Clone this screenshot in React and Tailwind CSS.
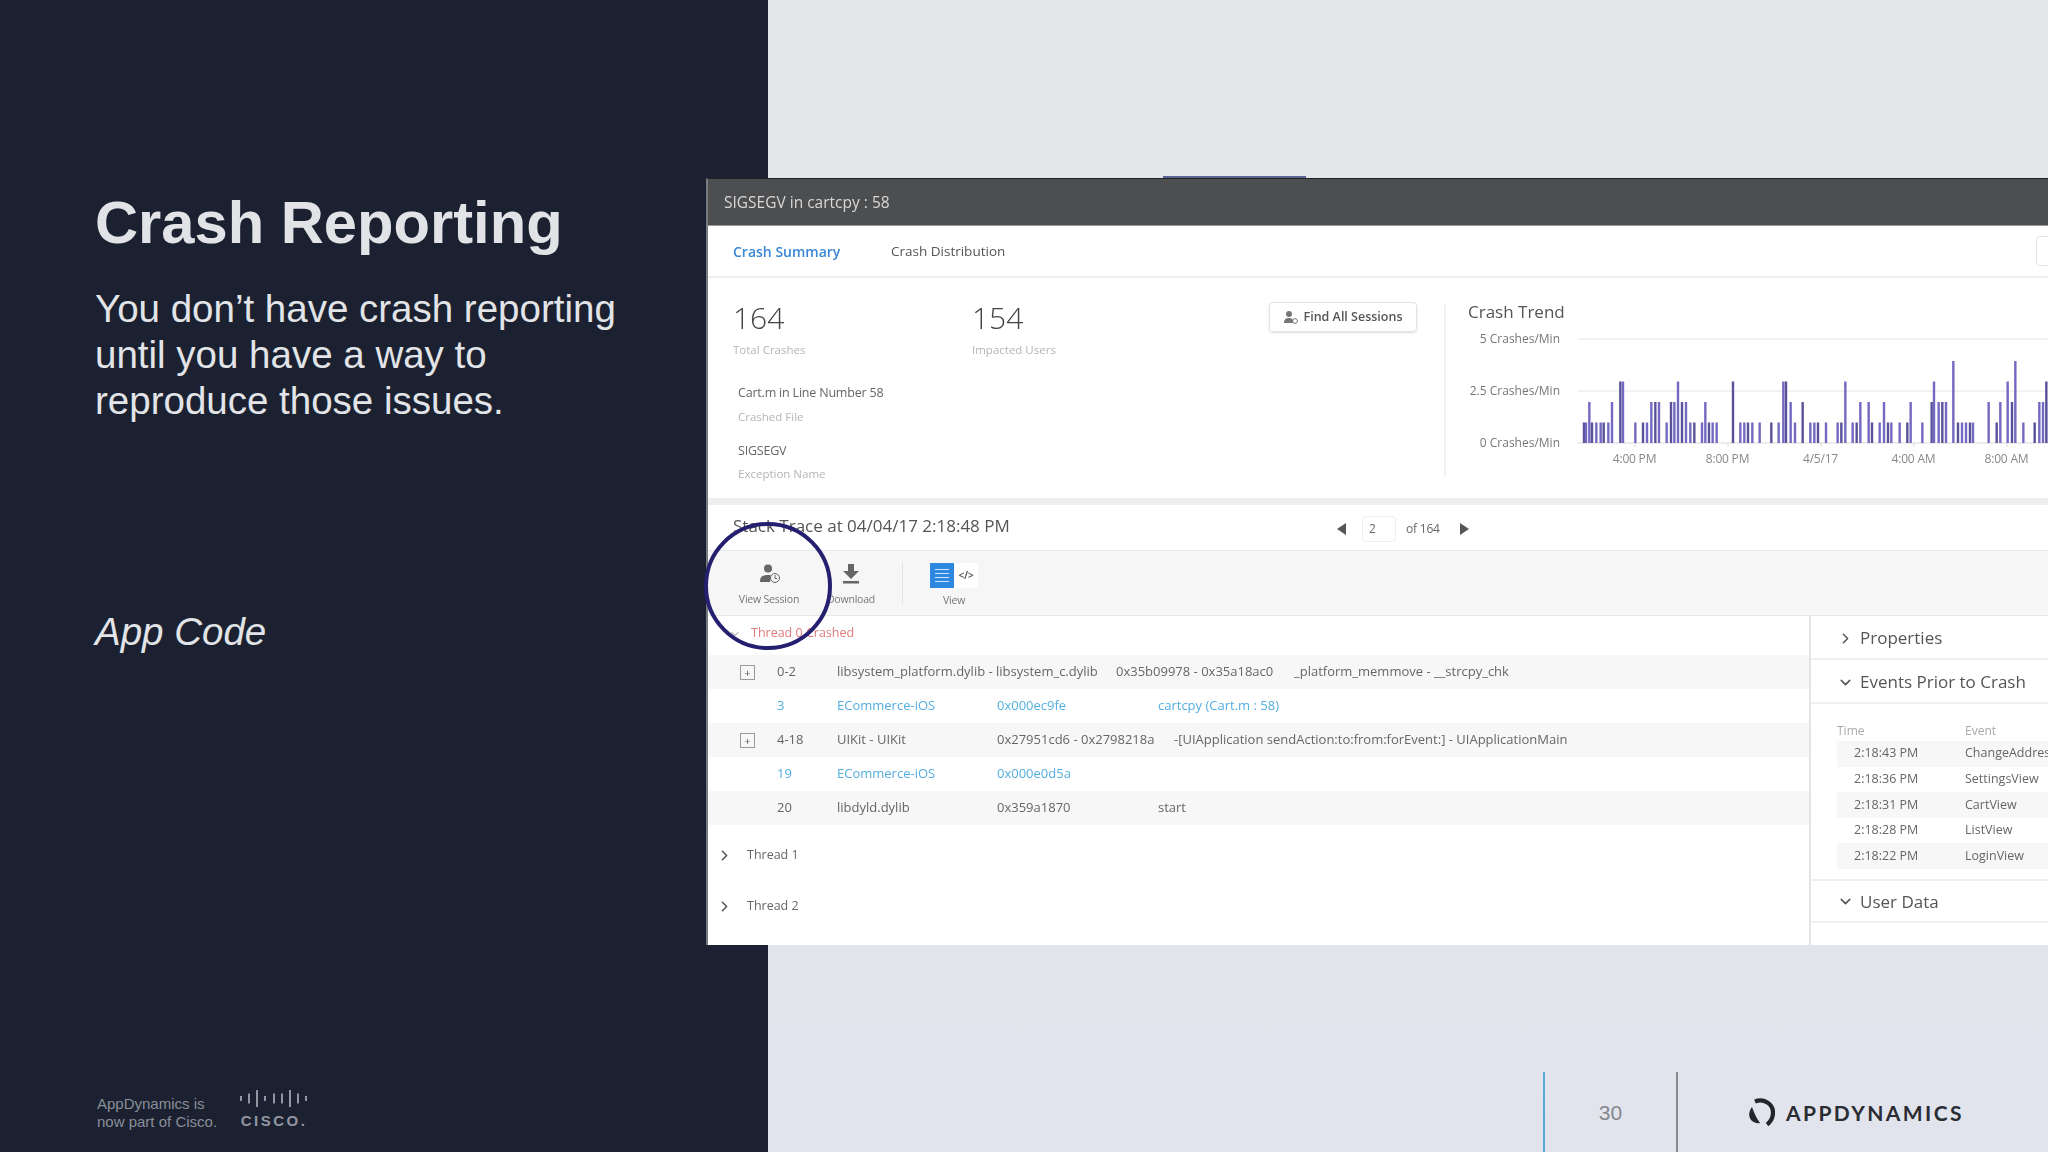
import React from 'react';
import { ChevronRight, ChevronDown } from 'lucide-react';

// bar x positions read off the chart crop, [x, level]
const bars = [
  [66, 1], [72, 1], [82, 2], [90, 1], [103, 1], [116, 1], [125, 1], [139, 1], [150, 2],
  [175, 3], [183, 3], [220, 1], [243, 1], [255, 1], [268, 2], [280, 2], [291, 2],
  [314, 1], [327, 2], [337, 2], [348, 3], [360, 2], [372, 2], [385, 1], [397, 1],
  [420, 1], [430, 2], [441, 1], [452, 1], [464, 1],
  [513, 3], [535, 1], [547, 1], [558, 1], [571, 1], [593, 1],
  [628, 1], [650, 1], [664, 3], [672, 3], [686, 2], [699, 1], [722, 2], [745, 1], [757, 1], [768, 1], [792, 1],
  [827, 1], [838, 1], [850, 3], [872, 1], [884, 1], [895, 2], [920, 2], [930, 1], [953, 1], [966, 2], [978, 1], [988, 1],
  [1013, 1], [1036, 1], [1046, 2], [1081, 1],
  [1109, 2], [1116, 3], [1130, 2], [1141, 2], [1152, 2], [1174, 4], [1188, 1], [1200, 1], [1212, 1], [1224, 1], [1233, 1],
  [1280, 2], [1304, 1], [1315, 2], [1337, 3], [1350, 2], [1360, 4], [1384, 1], [1418, 1], [1432, 2], [1443, 2], [1453, 3], [1461, 2],
];

const events = [
  ['2:18:43 PM', 'ChangeAddressView'],
  ['2:18:36 PM', 'SettingsView'],
  ['2:18:31 PM', 'CartView'],
  ['2:18:28 PM', 'ListView'],
  ['2:18:22 PM', 'LoginView'],
];

const CrashChart = () => (
  <svg width="478" height="112" viewBox="0 0 478 112" className="block">
    <line x1="6" y1="4" x2="478" y2="4" stroke="#eeeeee" strokeWidth="1.5" />
    <line x1="6" y1="56" x2="478" y2="56" stroke="#eeeeee" strokeWidth="1.5" />
    <line x1="6" y1="108" x2="478" y2="108" stroke="#e6e6e6" strokeWidth="1.5" />
    {bars.map(([x, level], i) => (
      <rect
        key={i}
        x={x / 3 + 1560 - 1570 - 1.2}
        y={108 - level * 20.5}
        width="2.4"
        height={level * 20.5}
        fill={i % 3 === 0 ? '#5a5299' : '#7469c2'}
      />
    ))}
    {[63, 156, 249, 342, 435].map((x) => (
      <line key={x} x1={x} y1="108" x2={x} y2="112" stroke="#dddddd" />
    ))}
  </svg>
);

const ExpandBox = () => (
  <span className="flex h-[15px] w-[15px] items-center justify-center border border-[#9a9a9a] text-[11px] leading-none text-[#555]">+</span>
);

const Caret = ({ open }) =>
  open ? (
    <ChevronDown size={17} strokeWidth={2.2} className="text-[#555]" />
  ) : (
    <ChevronRight size={17} strokeWidth={2.2} className="text-[#555]" />
  );

const CrashPanel = () => (
  <div className="flex h-[767px] w-[1342px] flex-col overflow-hidden border-t border-l-2 border-t-[#222] border-l-[#777a7e] bg-white font-['Open_Sans',sans-serif] blur-[0.6px]">
    <div className="flex h-[47px] shrink-0 items-center border-b border-[#999] bg-[#4d4e50] pl-[16px] pt-[2px] text-[15.5px] text-[#d8d8d8]">
      SIGSEGV in cartcpy : 58
    </div>

    <div className="relative flex h-[52px] shrink-0 items-center border-b-2 border-[#eeeeee] pl-[25px]">
      <span className="w-[158px] text-[14px] font-semibold text-[#3a86d4]">Crash Summary</span>
      <span className="text-[13.5px] font-medium text-[#555]">Crash Distribution</span>
      <span className="absolute right-[-10px] top-[10px] h-[30px] w-[22px] rounded-sm border border-[#e5e5e5]"></span>
    </div>

    <div className="flex h-[220px] shrink-0">
      <div className="w-[736px] shrink-0 pl-[25px]">
        <div className="flex pt-[22px]">
          <div className="w-[239px]">
            <div className="text-[30px] font-light leading-[36px] text-[#444]">164</div>
            <div className="mt-[6px] text-[11.5px] leading-[16px] text-[#b5b5b5]">Total Crashes</div>
          </div>
          <div>
            <div className="text-[30px] font-light leading-[36px] text-[#444]">154</div>
            <div className="mt-[6px] text-[11.5px] leading-[16px] text-[#b5b5b5]">Impacted Users</div>
          </div>
          <button className="ml-auto mr-[27px] mt-[2px] flex h-[30px] w-[148px] items-center justify-center gap-[6px] rounded-sm border border-[#e2e2e2] text-[12.5px] font-semibold text-[#555] shadow-sm">
            <svg width="14" height="15" viewBox="0 0 14 15" fill="#777">
              <circle cx="5" cy="4" r="3" />
              <path d="M0 13c0-4 2-5 5-5s4 1 4 3v2z" />
              <circle cx="11" cy="11" r="2.4" fill="none" stroke="#777" />
            </svg>
            Find All Sessions
          </button>
        </div>
        <div className="pl-[5px]">
          <div className="mt-[26px] text-[12.5px] leading-[18px] tracking-[-0.2px] text-[#666]">Cart.m in Line Number 58</div>
          <div className="mt-[7px] text-[11.5px] leading-[16px] text-[#b5b5b5]">Crashed File</div>
          <div className="mt-[17px] text-[12.5px] leading-[18px] tracking-[-0.2px] text-[#666]">SIGSEGV</div>
          <div className="mt-[6px] text-[11.5px] leading-[16px] text-[#b5b5b5]">Exception Name</div>
        </div>
      </div>
      <div className="mt-[27px] h-[172px] w-[2px] shrink-0 bg-[#f1f1f1]"></div>
      <div className="pl-[22px] pt-[24px]">
        <div className="text-[17px] leading-[20px] text-[#555]">Crash Trend</div>
        <div className="mt-[9px] flex">
          <div className="flex h-[120px] w-[92px] flex-col justify-between text-right text-[12px] leading-[16px] text-[#777]">
            <span>5 Crashes/Min</span>
            <span>2.5 Crashes/Min</span>
            <span>0 Crashes/Min</span>
          </div>
          <div className="ml-[12px] mt-[4px]">
            <CrashChart />
            <div className="mt-[4px] ml-[16px] flex text-center text-[12px] leading-[16px] tracking-[-0.2px] text-[#888]">
              <span className="w-[93px] shrink-0">4:00 PM</span>
              <span className="w-[93px] shrink-0">8:00 PM</span>
              <span className="w-[93px] shrink-0">4/5/17</span>
              <span className="w-[93px] shrink-0">4:00 AM</span>
              <span className="w-[93px] shrink-0">8:00 AM</span>
            </div>
          </div>
        </div>
      </div>
    </div>

    <div className="h-[7px] shrink-0 bg-[#eeeeee]"></div>

    <div className="flex h-[46px] shrink-0 items-center border-b border-[#e8e8e8] pl-[25px] pt-[2px]">
      <span className="mb-[5px] w-[604px] text-[17px] text-[#555]">Stack Trace at 04/04/17 2:18:48 PM</span>
      <svg width="9" height="12" viewBox="0 0 9 12" fill="#555"><path d="M9 0v12L0 6z" /></svg>
      <span className="ml-[16px] flex h-[26px] w-[34px] items-center rounded-sm border border-[#eeeeee] pl-[6px] text-[12px] text-[#666]">2</span>
      <span className="ml-[10px] text-[12px] tracking-[-0.2px] text-[#666]">of 164</span>
      <svg width="9" height="12" viewBox="0 0 9 12" fill="#555" className="ml-[20px]"><path d="M0 0v12l9-6z" /></svg>
    </div>

    <div className="flex h-[65px] shrink-0 items-start border-b border-[#e8e8e8] bg-[#f6f6f6] text-[10.5px] tracking-[-0.2px] text-[#777]">
      <div className="ml-[29px] flex w-[64px] flex-col items-center pt-[13px]">
        <svg width="24" height="20" viewBox="0 0 24 20" fill="#666">
          <circle cx="11" cy="4.5" r="4" />
          <path d="M3 18c0-5 2-7 8-7 2 0 3 .5 3 1l-1 6z" />
          <circle cx="18" cy="14" r="4.5" fill="#f6f6f6" stroke="#666" />
          <path d="M18 11v3.5h2" fill="none" stroke="#666" />
        </svg>
        <span className="mt-[7px] leading-[16px]">View Session</span>
      </div>
      <div className="ml-[18px] flex w-[64px] flex-col items-center pt-[13px]">
        <svg width="18" height="20" viewBox="0 0 18 20" fill="#666">
          <path d="M6 0h6v7h5l-8 8-8-8h5z" />
          <rect x="1" y="17" width="16" height="2.5" />
        </svg>
        <span className="mt-[7px] leading-[16px]">Download</span>
      </div>
      <div className="ml-[19px] mt-[11px] h-[43px] w-px bg-[#e4e4e4]"></div>
      <div className="ml-[27px] flex flex-col items-center pt-[12px]">
        <div className="flex h-[25px]">
          <span className="flex w-[24px] flex-col justify-center gap-[3px] bg-[#2f88e0] px-[5px]">
            <i className="h-px bg-[#cfe4fa]"></i>
            <i className="h-px bg-[#cfe4fa]"></i>
            <i className="h-px bg-[#cfe4fa]"></i>
            <i className="h-px bg-[#cfe4fa]"></i>
          </span>
          <span className="flex w-[24px] items-center justify-center bg-white text-[10px] font-bold text-[#666]">&lt;/&gt;</span>
        </div>
        <span className="mt-[4px] leading-[16px]">View</span>
      </div>
    </div>

    <div className="flex min-h-0 flex-1">
      <div className="min-w-0 flex-1 text-[13px] text-[#666]">
        <div className="flex h-[39px] items-center pb-[4px] pl-[21px]">
          <ChevronDown size={12} className="text-[#888]" />
          <span className="ml-[10px] text-[12.5px] text-[#e07a7c]">Thread 0 Crashed</span>
        </div>

        <div className="flex h-[34px] items-center bg-[#f7f7f7] pl-[32px]">
          <span className="w-[37px]"><ExpandBox /></span>
          <span className="w-[60px]">0-2</span>
          <span className="w-[279px]">libsystem_platform.dylib - libsystem_c.dylib</span>
          <span className="w-[178px]">0x35b09978 - 0x35a18ac0</span>
          <span>_platform_memmove - __strcpy_chk</span>
        </div>
        <div className="flex h-[34px] items-center pl-[32px] text-[#55aee0]">
          <span className="w-[37px]"></span>
          <span className="w-[60px]">3</span>
          <span className="w-[160px]">ECommerce-iOS</span>
          <span className="w-[161px]">0x000ec9fe</span>
          <span>cartcpy (Cart.m : 58)</span>
        </div>
        <div className="flex h-[34px] items-center bg-[#f7f7f7] pl-[32px]">
          <span className="w-[37px]"><ExpandBox /></span>
          <span className="w-[60px]">4-18</span>
          <span className="w-[160px]">UIKit - UIKit</span>
          <span className="w-[177px]">0x27951cd6 - 0x2798218a</span>
          <span>-[UIApplication sendAction:to:from:forEvent:] - UIApplicationMain</span>
        </div>
        <div className="flex h-[34px] items-center pl-[32px] text-[#55aee0]">
          <span className="w-[37px]"></span>
          <span className="w-[60px]">19</span>
          <span className="w-[160px]">ECommerce-iOS</span>
          <span>0x000e0d5a</span>
        </div>
        <div className="flex h-[34px] items-center bg-[#f7f7f7] pl-[32px]">
          <span className="w-[37px]"></span>
          <span className="w-[60px]">20</span>
          <span className="w-[160px]">libdyld.dylib</span>
          <span className="w-[161px]">0x359a1870</span>
          <span>start</span>
        </div>

        <div className="mt-[10px] flex h-[40px] items-center pl-[8px] text-[12.5px]">
          <Caret />
          <span className="ml-[14px]">Thread 1</span>
        </div>
        <div className="mt-[11px] flex h-[40px] items-center pl-[8px] text-[12.5px]">
          <Caret />
          <span className="ml-[14px]">Thread 2</span>
        </div>
      </div>

      <div className="w-[239px] shrink-0 border-l-2 border-[#e4e4e4] text-[#555]">
        <div className="flex h-[44px] items-center gap-[6px] border-b-2 border-[#f0f0f0] pl-[26px] pt-[2px] text-[17px]">
          <Caret />
          Properties
        </div>
        <div className="flex h-[44px] items-center gap-[6px] border-b-2 border-[#f0f0f0] pl-[26px] pt-[2px] text-[17px]">
          <Caret open />
          Events Prior to Crash
        </div>
        <div className="overflow-hidden whitespace-nowrap pb-[10px] pl-[26px] pt-[19px] text-[12.5px]">
          <div className="mb-[2px] flex text-[12px] leading-[16px] text-[#aaa]">
            <span className="w-[128px] shrink-0">Time</span>
            <span>Event</span>
          </div>
          {events.map(([time, name], i) => (
            <div key={time} className={`flex h-[25.6px] items-center pl-[17px] text-[#666] ${i % 2 === 0 ? 'bg-[#f7f7f7]' : ''}`}>
              <span className="w-[111px] shrink-0">{time}</span>
              <span>{name}</span>
            </div>
          ))}
        </div>
        <div className="flex h-[44px] items-center gap-[6px] border-y-2 border-[#f0f0f0] pl-[26px] pt-[2px] text-[17px]">
          <Caret open />
          User Data
        </div>
      </div>
    </div>
  </div>
);

const CiscoBars = () => (
  <svg width="68" height="17" viewBox="0 0 68 17" fill="#9296a0">
    {[[1, 5], [9, 10], [17, 17], [25, 5], [34, 10], [42, 10], [50, 17], [58, 10], [66, 5]].map(([x, h]) => (
      <rect key={x} x={x - 1} y={(17 - h) / 2} width="2" height={h} />
    ))}
  </svg>
);

const AppDynamicsMark = () => (
  <svg width="26" height="29" viewBox="0 0 26 29" fill="#23252b">
    <path d="M6 3.5C15 0 24 6 24 14.5c0 5-2 9-6 12" fill="none" stroke="#23252b" strokeWidth="4.2" />
    <path d="M3 9C0 13-1 18 2 22c2 2 6 4 9 3C7 20 5 14 3 9z" />
  </svg>
);

export default function App() {
  return (
    <div className="relative flex h-[1152px] w-[2048px] overflow-hidden font-['Liberation_Sans',Arial,sans-serif]">
      <aside className="flex w-[768px] shrink-0 flex-col bg-[#1b2130] pl-[95px]">
        <h1 className="mt-[187px] text-[59.7px] font-bold leading-[72px] text-[#e1e3e7]">Crash Reporting</h1>
        <p className="mt-[27px] w-[580px] text-[38.5px] leading-[46px] text-[#e2e4e8]">
          You don’t have crash reporting
          <br />
          until you have a way to
          <br />
          reproduce those issues.
        </p>
        <p className="mt-[185px] text-[38.5px] italic leading-[46px] text-[#e2e4e8]">App Code</p>
        <div className="mt-auto mb-[22px] flex items-start">
          <div className="ml-[2px] mt-[5px] w-[143px] text-[15px] leading-[17.5px] text-[#8a8e98]">
            AppDynamics is
            <br />
            now part of Cisco.
          </div>
          <div className="flex flex-col items-center">
            <CiscoBars />
            <span className="mt-[6px] text-[15px] font-bold leading-[15px] tracking-[2.5px] text-[#9296a0]">CISCO.</span>
          </div>
        </div>
      </aside>

      <main className="flex flex-1 flex-col justify-end bg-gradient-to-b from-[#e5e7ea] to-[#e2e4ed]">
        <div className="flex h-[80px] items-stretch">
          <div className="ml-[775px] flex w-[135px] items-center justify-center border-l-2 border-r-2 border-l-[#5aa5dc] border-r-[#8a8a8a] pt-[2px] text-[21px] text-[#85878c]">
            30
          </div>
          <div className="ml-[71px] mt-[26px] flex h-[29px] items-center gap-[11px]">
            <AppDynamicsMark />
            <span className="font-['Lato',sans-serif] text-[21px] font-bold tracking-[2.4px] text-[#2a2c33]">APPDYNAMICS</span>
          </div>
        </div>
      </main>

      {/* pasted product screenshot, sits across both halves of the slide */}
      <div className="absolute left-[1163px] top-[176px] h-[2px] w-[143px] bg-[#5a6596]"></div>
      <div className="absolute left-[706px] top-[178px]">
        <CrashPanel />
      </div>
      <div className="absolute left-[704px] top-[522px] h-[128px] w-[128px] rounded-full border-4 border-[#241f6e]"></div>
    </div>
  );
}
